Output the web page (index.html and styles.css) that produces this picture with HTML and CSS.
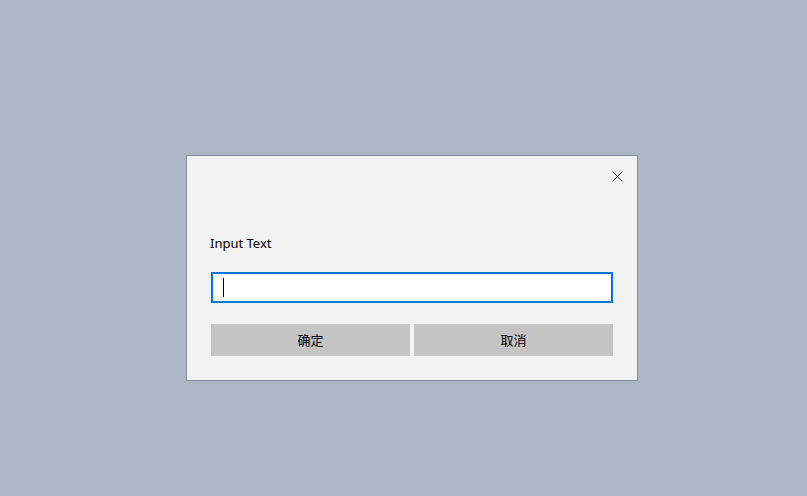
FILE: index.html
```html
<!DOCTYPE html>
<html lang="zh-CN">
<head>
    <meta charset="UTF-8">
    <title>Input Dialog</title>
    <link rel="stylesheet" href="styles.css">
</head>
<body>
    <div class="dialog">
        <div class="dialog-header">
            <button class="close-btn" title="Close">
                <svg width="11" height="11" viewBox="0 0 11 11">
                    <path d="M0.5 0.5 L10.5 10.5 M10.5 0.5 L0.5 10.5" stroke="#333" stroke-width="1" fill="none"/>
                </svg>
            </button>
        </div>
        <div class="dialog-body">
            <label class="prompt" for="answer">Input Text</label>
            <div class="input-box">
                <input id="answer" type="text">
                <span class="caret"></span>
            </div>
            <div class="actions">
                <button class="btn">确定</button>
                <button class="btn">取消</button>
            </div>
        </div>
    </div>
</body>
</html>
```

FILE: styles.css
```css
:root {
    --desk: #acb7c8;
    --panel: #f2f2f2;
    --edge: #878f9c;
    --accent: #0078d7;
    --button: #c4c4c4;
}

body {
    margin: 0;
    min-height: 100vh;
    background: var(--desk);
    font-family: 'Noto Sans', 'Noto Sans CJK SC', sans-serif;
    padding: 155px 0 0 186px;
    box-sizing: border-box;
}

.dialog {
    width: 452px;
    height: 226px;
    box-sizing: border-box;
    background: var(--panel);
    border: 1px solid var(--edge);
}

.dialog-header {
    height: 40px;
    display: flex;
    justify-content: flex-end;
    align-items: center;
    padding-right: 14px;
}

.close-btn {
    border: none;
    background: none;
    padding: 0;
    width: 11px;
    height: 11px;
    display: flex;
    cursor: pointer;
}

.dialog-body {
    padding: 0 24px 0 23px;
}

.prompt {
    display: block;
    margin-top: 38px;
    font-size: 13px;
    line-height: 18px;
    color: #000;
}

.input-box {
    position: relative;
    margin: 20px 0 0 1px;
    height: 31px;
    border: 2px solid var(--accent);
    background: #fff;
    box-sizing: border-box;
}

.input-box input {
    width: 100%;
    height: 100%;
    border: none;
    outline: none;
    background: none;
    padding: 0 10px;
    box-sizing: border-box;
}

.caret {
    position: absolute;
    left: 10px;
    top: 4px;
    width: 1px;
    height: 19px;
    background: #000;
}

.actions {
    display: flex;
    gap: 4px;
    margin: 21px 0 0 1px;
}

.btn {
    flex: 1;
    height: 32px;
    border: none;
    background: var(--button);
    font-family: 'Noto Sans CJK SC', sans-serif;
    font-size: 13px;
    color: #000;
    padding: 0 0 2px;
}
```
